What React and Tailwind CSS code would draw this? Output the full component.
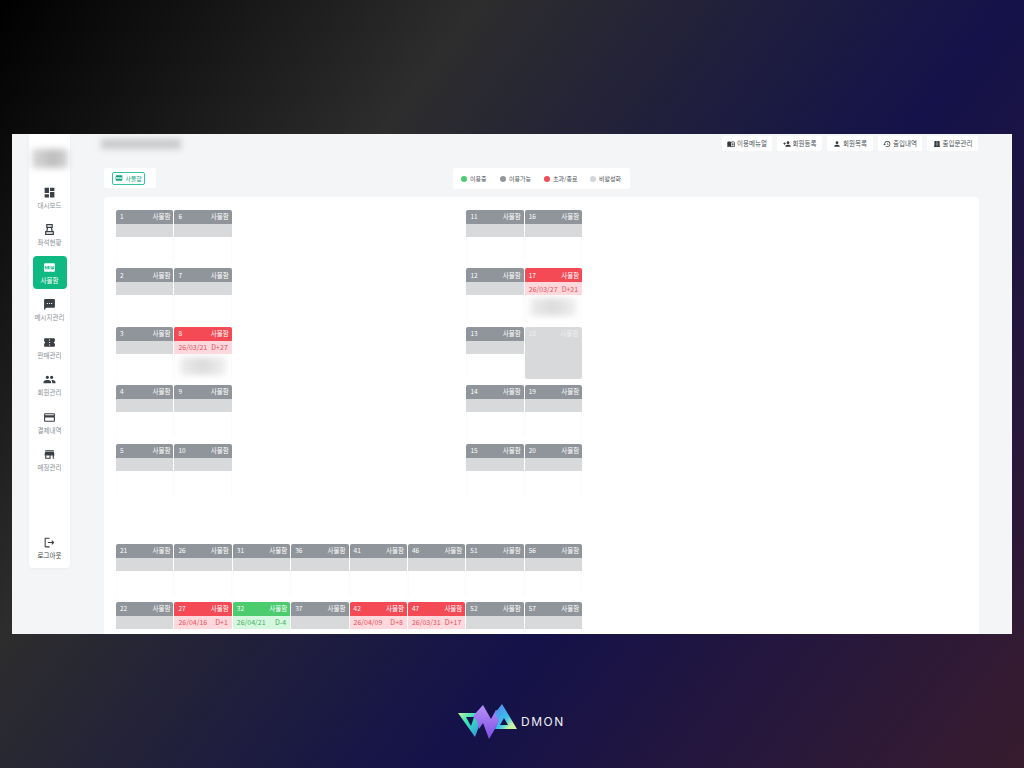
import {
	MdDashboard,
	MdFiberNew,
	MdSms,
	MdConfirmationNumber,
	MdPeople,
	MdCreditCard,
	MdStore,
	MdOutlineLogout,
	MdMenuBook,
	MdPersonAdd,
	MdPerson,
	MdHistory,
	MdDoorSliding,
} from "react-icons/md";

function SeatIcon({ size }) {
	return (
		<svg
			width={size}
			height={size}
			viewBox="0 0 24 24"
			fill="none"
			stroke="currentColor"
			strokeWidth="2.2">
			<path d="M7 3h10v5H7zM5 16h14v5H5zM8.5 8L7 16M15.5 8L17 16" />
		</svg>
	);
}

const menu = [
	{ name: "대시보드", icon: MdDashboard },
	{ name: "좌석현황", icon: SeatIcon },
	{ name: "사물함", icon: MdFiberNew, active: true },
	{ name: "메시지관리", icon: MdSms },
	{ name: "판매관리", icon: MdConfirmationNumber },
	{ name: "회원관리", icon: MdPeople },
	{ name: "결제내역", icon: MdCreditCard },
	{ name: "매장관리", icon: MdStore },
];

const topButtons = [
	{ name: "이용메뉴얼", icon: MdMenuBook, width: "w-[50px]" },
	{ name: "회원등록", icon: MdPersonAdd, width: "w-[45px]" },
	{ name: "회원목록", icon: MdPerson, width: "w-[46px]" },
	{ name: "출입내역", icon: MdHistory, width: "w-[44px]" },
	{ name: "출입문관리", icon: MdDoorSliding, width: "w-[51px]" },
];

const legend = [
	{ name: "이용중", dot: "bg-[#4ccb6f]", width: "w-[39px]" },
	{ name: "이용가능", dot: "bg-[#92979c]", width: "w-[44px]" },
	{ name: "초과/종료", dot: "bg-[#f44a56]", width: "w-[46px]" },
	{ name: "비활성화", dot: "bg-[#d3d5d8]", width: "w-[36px]" },
];

const lockers = {
	8: { state: "over", date: "26/03/21", day: "D+27", member: true },
	17: { state: "over", date: "26/03/27", day: "D+21", member: true },
	18: { state: "off" },
	27: { state: "over", date: "26/04/16", day: "D+1" },
	32: { state: "use", date: "26/04/21", day: "D-4" },
	42: { state: "over", date: "26/04/09", day: "D+8" },
	47: { state: "over", date: "26/03/31", day: "D+17" },
};

const headColor = {
	over: "bg-[#f44a56]",
	use: "bg-[#4ccb6f]",
};

const bandColor = {
	over: "bg-[#fdd8dc] text-[#e8505b]",
	use: "bg-[#d6f7df] text-[#3fae60]",
};

function Locker({ num }) {
	const info = lockers[num] || {};

	if (info.state === "off") {
		return (
			<div className="h-[52px] w-[57.4px] rounded-[2px] bg-[#d7d9da] px-[4px] py-[3px]">
				<div className="flex h-[8px] items-center justify-between text-[6.5px] text-[#eef0f1]">
					<span>{num}</span>
					<span>사물함</span>
				</div>
			</div>
		);
	}

	return (
		<div className="h-[52px] w-[57.4px] border-x border-[#fbfbfc]">
			<div
				className={`-mx-px flex h-[14px] items-center justify-between rounded-t-[2px] pr-[3px] pl-[4px] text-[6.5px] text-white ${headColor[info.state] || "bg-[#8f959a]"}`}>
				<span>{num}</span>
				<span>사물함</span>
			</div>
			<div
				className={`-mx-px flex h-[13px] items-center justify-between px-[4px] text-[7px] ${bandColor[info.state] || "bg-[#d7d9da]"}`}>
				{info.date && (
					<>
						<span>{info.date}</span>
						<span>{info.day}</span>
					</>
				)}
			</div>
			{info.member && (
				<div className="mx-auto mt-[3px] h-[18px] w-[46px] bg-[linear-gradient(90deg,#ececec,#dcdcdc_50%,#efefef)] blur-[3px]" />
			)}
		</div>
	);
}

function LockerColumn({ start, count }) {
	return (
		<div className="flex flex-col gap-[6.4px]">
			{Array.from({ length: count }, (_, i) => (
				<Locker key={i} num={start + i} />
			))}
		</div>
	);
}

function Sidebar() {
	return (
		<aside className="ml-[17px] flex h-[434px] w-[41px] shrink-0 flex-col items-center rounded-b-[4px] bg-white shadow-[0_1px_3px_rgba(0,0,0,0.04)]">
			<div className="mt-[15px] h-[19px] w-[36px] bg-[linear-gradient(90deg,#d8d8d8,#bdbdbd_60%,#d4d4d4)] blur-[3px]" />
			<nav className="mt-[13px] flex flex-col items-center">
				{menu.map((item) => {
					const Icon = item.icon;
					return (
						<div
							key={item.name}
							className={`mb-[4.5px] flex h-[33px] w-[34px] flex-col items-center justify-center rounded-[4px] ${item.active ? "bg-[#10b981] text-white" : "text-[#3a3f45]"}`}>
							<Icon size={13} />
							<span
								className={`mt-[1px] whitespace-nowrap text-[6.5px] leading-[10px] ${item.active ? "text-white" : "text-[#8a8f95]"}`}>
								{item.name}
							</span>
						</div>
					);
				})}
			</nav>
			<div className="mt-auto mb-[8px] flex flex-col items-center text-[#3a3f45]">
				<MdOutlineLogout size={13} />
				<span className="mt-[1px] whitespace-nowrap text-[6.5px] leading-[10px]">
					로그아웃
				</span>
			</div>
		</aside>
	);
}

function Logo() {
	return (
		<svg width="60" height="38" viewBox="0 0 60 38" fill="none">
			<defs>
				<linearGradient id="left" x1="0" y1="0" x2="1" y2="1">
					<stop offset="0" stopColor="#c8f5a0" />
					<stop offset="0.35" stopColor="#3fe6b5" />
					<stop offset="1" stopColor="#2f8fe8" />
				</linearGradient>
				<linearGradient id="mid" x1="0" y1="0" x2="0" y2="1">
					<stop offset="0" stopColor="#b891f6" />
					<stop offset="1" stopColor="#7c4ee8" />
				</linearGradient>
				<linearGradient id="right" x1="0" y1="0" x2="1" y2="1">
					<stop offset="0" stopColor="#5f7df0" />
					<stop offset="0.55" stopColor="#36c4ee" />
					<stop offset="0.8" stopColor="#c8f5a0" />
					<stop offset="1" stopColor="#c8f5a0" />
				</linearGradient>
			</defs>
			<path
				fillRule="evenodd"
				d="M0 10H18L23 18L17 34ZM8 14L13 23L16 14Z"
				fill="url(#left)"
			/>
			<path
				d="M15 13L25 2L33 16L38 7L45 12L31 36L25 20L21 26L19 18Z"
				fill="url(#mid)"
			/>
			<path
				fillRule="evenodd"
				d="M44 1L59 26H37L41 18L37 10ZM46 15L42 22H50Z"
				fill="url(#right)"
			/>
		</svg>
	);
}

export default function App() {
	return (
		<div className="flex h-[768px] w-[1024px] flex-col overflow-hidden bg-[linear-gradient(127deg,#000_0%,#2d2d2d_30%,#14124a_63%,#381c2e_100%)] font-['Noto_Sans_CJK_KR','Noto_Sans',sans-serif]">
			<div className="mt-[134px] ml-[12px] flex h-[500px] w-[1000px] overflow-hidden bg-[#f3f5f7]">
				<Sidebar />

				<main className="ml-[34px] flex w-[875px] shrink-0 flex-col">
					<div className="flex h-[34px] items-start justify-between">
						<div className="mt-[5px] -ml-[3px] h-[10px] w-[80px] bg-[#c8cacc] blur-[3px]" />
						<div className="mt-[2px] mr-[1px] flex gap-[5px]">
							{topButtons.map((btn) => {
								const Icon = btn.icon;
								return (
									<div
										key={btn.name}
										className={`flex h-[15px] items-center justify-center gap-[2px] rounded-[2px] bg-white text-[6.5px] text-[#4a4f55] ${btn.width}`}>
										<Icon size={8} className="text-[#33383d]" />
										<span className="whitespace-nowrap">{btn.name}</span>
									</div>
								);
							})}
						</div>
					</div>

					<div className="flex h-[29px] items-start justify-between">
						<div className="flex h-[20px] w-[52px] items-center rounded-[3px] bg-white pl-[8px]">
							<div className="flex h-[13px] w-[33px] items-center justify-center gap-[2px] rounded-[2px] border border-[#34c5a0] text-[6px] text-[#10a37f]">
								<MdFiberNew size={8} />
								<span className="whitespace-nowrap">사물함</span>
							</div>
						</div>
						<div className="mr-[349px] flex h-[21px] w-[177px] items-center rounded-[3px] bg-white pl-[8px]">
							{legend.map((item) => (
								<div
									key={item.name}
									className={`flex items-center gap-[3px] text-[6px] text-[#4a4f55] ${item.width}`}>
									<span className={`h-[6px] w-[6px] shrink-0 rounded-full ${item.dot}`} />
									<span className="whitespace-nowrap">{item.name}</span>
								</div>
							))}
						</div>
					</div>

					<section className="h-[437px] rounded-t-[4px] bg-white pt-[13px] pl-[12px]">
						<div className="flex gap-[1px]">
							<LockerColumn start={1} count={5} />
							<LockerColumn start={6} count={5} />
							<div className="w-[232.6px]" />
							<LockerColumn start={11} count={5} />
							<LockerColumn start={16} count={5} />
						</div>
						<div className="mt-[48px] flex gap-[1px]">
							{[21, 26, 31, 36, 41, 46, 51, 56].map((start) => (
								<LockerColumn key={start} start={start} count={2} />
							))}
						</div>
					</section>
				</main>
			</div>

			<div className="mt-[69px] ml-[458px] flex items-center gap-[3px]">
				<Logo />
				<span className="font-['Inter',sans-serif] text-[12px] font-normal tracking-[1.5px] text-[#f0f0f5]">
					DMON
				</span>
			</div>
		</div>
	);
}
